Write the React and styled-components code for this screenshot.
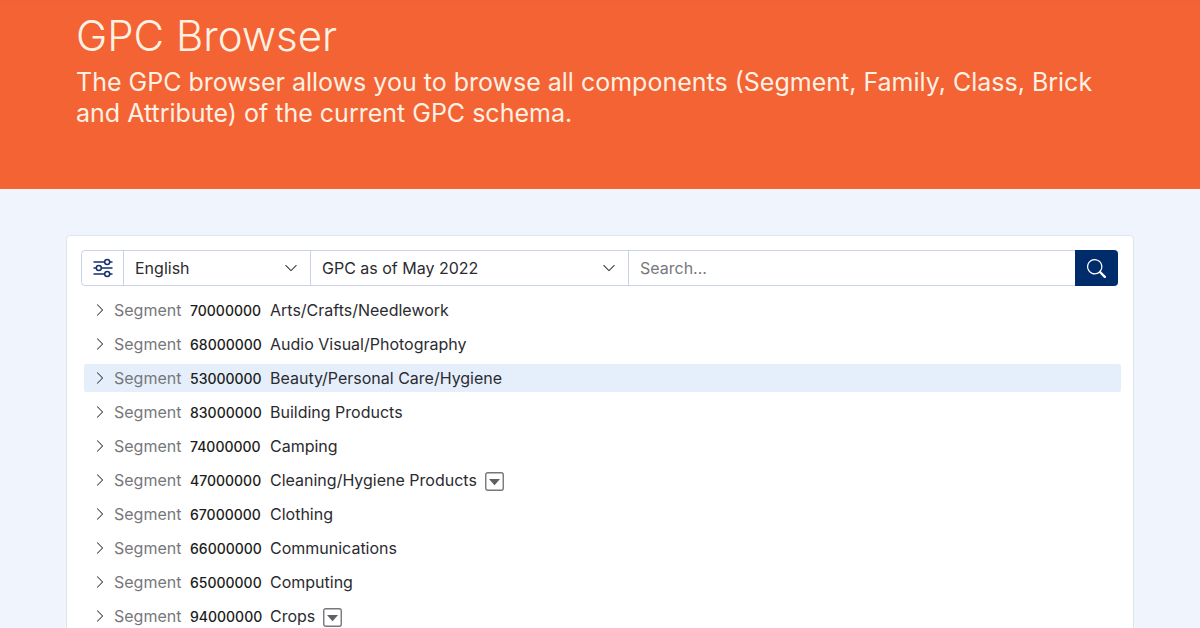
import React, { useState } from "react";
import styled, { createGlobalStyle } from "styled-components";
import { BsChevronDown, BsChevronRight, BsSearch } from "react-icons/bs";

const segments = [
  { code: "70000000", name: "Arts/Crafts/Needlework" },
  { code: "68000000", name: "Audio Visual/Photography" },
  { code: "53000000", name: "Beauty/Personal Care/Hygiene" },
  { code: "83000000", name: "Building Products" },
  { code: "74000000", name: "Camping" },
  { code: "47000000", name: "Cleaning/Hygiene Products", hasInfo: true },
  { code: "67000000", name: "Clothing" },
  { code: "66000000", name: "Communications" },
  { code: "65000000", name: "Computing" },
  { code: "94000000", name: "Crops", hasInfo: true },
];

const SlidersIcon = () => (
  <svg width="20" height="20" viewBox="0 0 20 20" fill="none" stroke="currentColor" strokeWidth="1.5" aria-hidden="true">
    <path d="M0.5 4H11.5M17 4H19.5M0.5 10H3M8.5 10H19.5M0.5 16H11.5M17 16H19.5" />
    <circle cx="14.2" cy="4" r="2.5" />
    <circle cx="5.8" cy="10" r="2.5" />
    <circle cx="14.2" cy="16" r="2.5" />
  </svg>
);

const CaretIcon = () => (
  <svg width="19" height="19" viewBox="0 0 19 19" aria-hidden="true">
    <rect x="0.75" y="0.75" width="17.5" height="17.5" rx="2" fill="none" stroke="#77777b" strokeWidth="1.4" />
    <path d="M4 7H15L9.5 13.2Z" fill="#606064" />
  </svg>
);

const Segment = ({ segment, selected, onSelect }) => (
  <Row $selected={selected}>
    <RowButton type="button" onClick={onSelect}>
      <BsChevronRight size={14} />
      <Level>Segment</Level>
      <Code>{segment.code}</Code>
      <span>{segment.name}</span>
    </RowButton>
    {segment.hasInfo && (
      <InfoButton type="button" aria-label={`Details of ${segment.name}`}>
        <CaretIcon />
      </InfoButton>
    )}
  </Row>
);

const App = () => {
  const [selected, setSelected] = useState("53000000");
  const [search, setSearch] = useState("");

  return (
    <>
      <GlobalStyle />
      <Banner>
        <Title>GPC Browser</Title>
        <Intro>
          The GPC browser allows you to browse all components (Segment, Family,
          Class, Brick and Attribute) of the current GPC schema.
        </Intro>
      </Banner>
      <Main>
        <Card>
          <Toolbar onSubmit={(e) => e.preventDefault()}>
            <FilterButton type="button" aria-label="Filters">
              <SlidersIcon />
            </FilterButton>
            <SelectBox $basis="187px">
              <Select aria-label="Language">
                <option>English</option>
              </Select>
              <BsChevronDown size={14} />
            </SelectBox>
            <SelectBox $basis="318px">
              <Select aria-label="Publication">
                <option>GPC as of May 2022</option>
              </Select>
              <BsChevronDown size={14} />
            </SelectBox>
            <SearchInput
              type="text"
              aria-label="Search"
              placeholder="Search..."
              value={search}
              onChange={(e) => setSearch(e.target.value)}
            />
            <SearchButton type="submit" aria-label="Search">
              <BsSearch size={19} />
            </SearchButton>
          </Toolbar>
          <Tree>
            {segments.map((segment) => (
              <Segment
                key={segment.code}
                segment={segment}
                selected={segment.code === selected}
                onSelect={() => setSelected(segment.code)}
              />
            ))}
          </Tree>
        </Card>
      </Main>
    </>
  );
};

const GlobalStyle = createGlobalStyle`
  * {
    box-sizing: border-box;
  }
  html {
    scrollbar-width: none;
  }
  body {
    margin: 0;
    background: #f0f4fc;
    color: #2b2b30;
    font-family: Inter, "Liberation Sans", sans-serif;
    font-size: 16px;
  }
  button, input, select {
    font: inherit;
    color: inherit;
  }
`;

const Banner = styled.header`
  padding: 11px 76px 60px;
  background: #f36334;
  border-top: 3px solid #f06236;
  color: #fff1e3;
`;

const Title = styled.h1`
  margin: 0;
  font-size: 42px;
  font-weight: 300;
  line-height: 44px;
`;

const Intro = styled.p`
  margin: 9px 0 0;
  font-size: 25px;
  line-height: 31px;
`;

const Main = styled.main`
  padding: 46px 66px 0;
`;

const Card = styled.section`
  padding: 14px 15px 14px 14px;
  background: #fff;
  border: 1px solid #e0e5ec;
  border-radius: 4px;
`;

const Toolbar = styled.form`
  display: flex;
  height: 36px;
  border: 1px solid #c9d2e6;
  border-radius: 4px;
`;

const FilterButton = styled.button`
  display: flex;
  align-items: center;
  justify-content: center;
  flex: 0 0 41px;
  padding: 0;
  border: 0;
  background: none;
  color: #14306e;
`;

const SelectBox = styled.div`
  display: flex;
  align-items: center;
  flex: 0 1 ${(props) => props.$basis};
  padding-right: 12px;
  border-left: 1px solid #c9d2e6;

  svg {
    flex: none;
    pointer-events: none;
  }
`;

const Select = styled.select`
  flex: 1;
  min-width: 0;
  height: 100%;
  padding: 0 0 0 11px;
  border: 0;
  background: none;
  appearance: none;
`;

const SearchInput = styled.input`
  flex: 1;
  min-width: 0;
  padding: 0 11px;
  border: 0;
  border-left: 1px solid #c9d2e6;
  background: none;

  &::placeholder {
    color: #77777d;
    opacity: 1;
  }
`;

const SearchButton = styled.button`
  display: flex;
  align-items: center;
  justify-content: center;
  flex: 0 0 43px;
  margin: -1px -1px -1px 0;
  padding: 0;
  border: 0;
  border-radius: 0 4px 4px 0;
  background: #002c6c;
  color: #fff;
`;

const Tree = styled.ul`
  display: flex;
  flex-direction: column;
  gap: 6px;
  margin: 10px -3px 0 3px;
  padding: 0;
  list-style: none;
`;

const Row = styled.li`
  display: flex;
  align-items: center;
  gap: 8px;
  height: 28px;
  border-radius: 2px;
  background: ${(props) => (props.$selected ? "#e5effc" : "none")};
`;

const RowButton = styled.button`
  display: flex;
  align-items: center;
  height: 100%;
  padding: 0 0 0 9px;
  border: 0;
  background: none;
  white-space: nowrap;
`;

const Level = styled.span`
  width: 76px;
  margin-left: 7px;
  color: #77777b;
  text-align: left;
`;

const Code = styled.span`
  width: 80px;
  color: #1c1c20;
  font-size: 14px;
  font-weight: 500;
  text-align: left;
`;

const InfoButton = styled.button`
  display: flex;
  padding: 2px 0 0;
  border: 0;
  background: none;
`;

export default App;
